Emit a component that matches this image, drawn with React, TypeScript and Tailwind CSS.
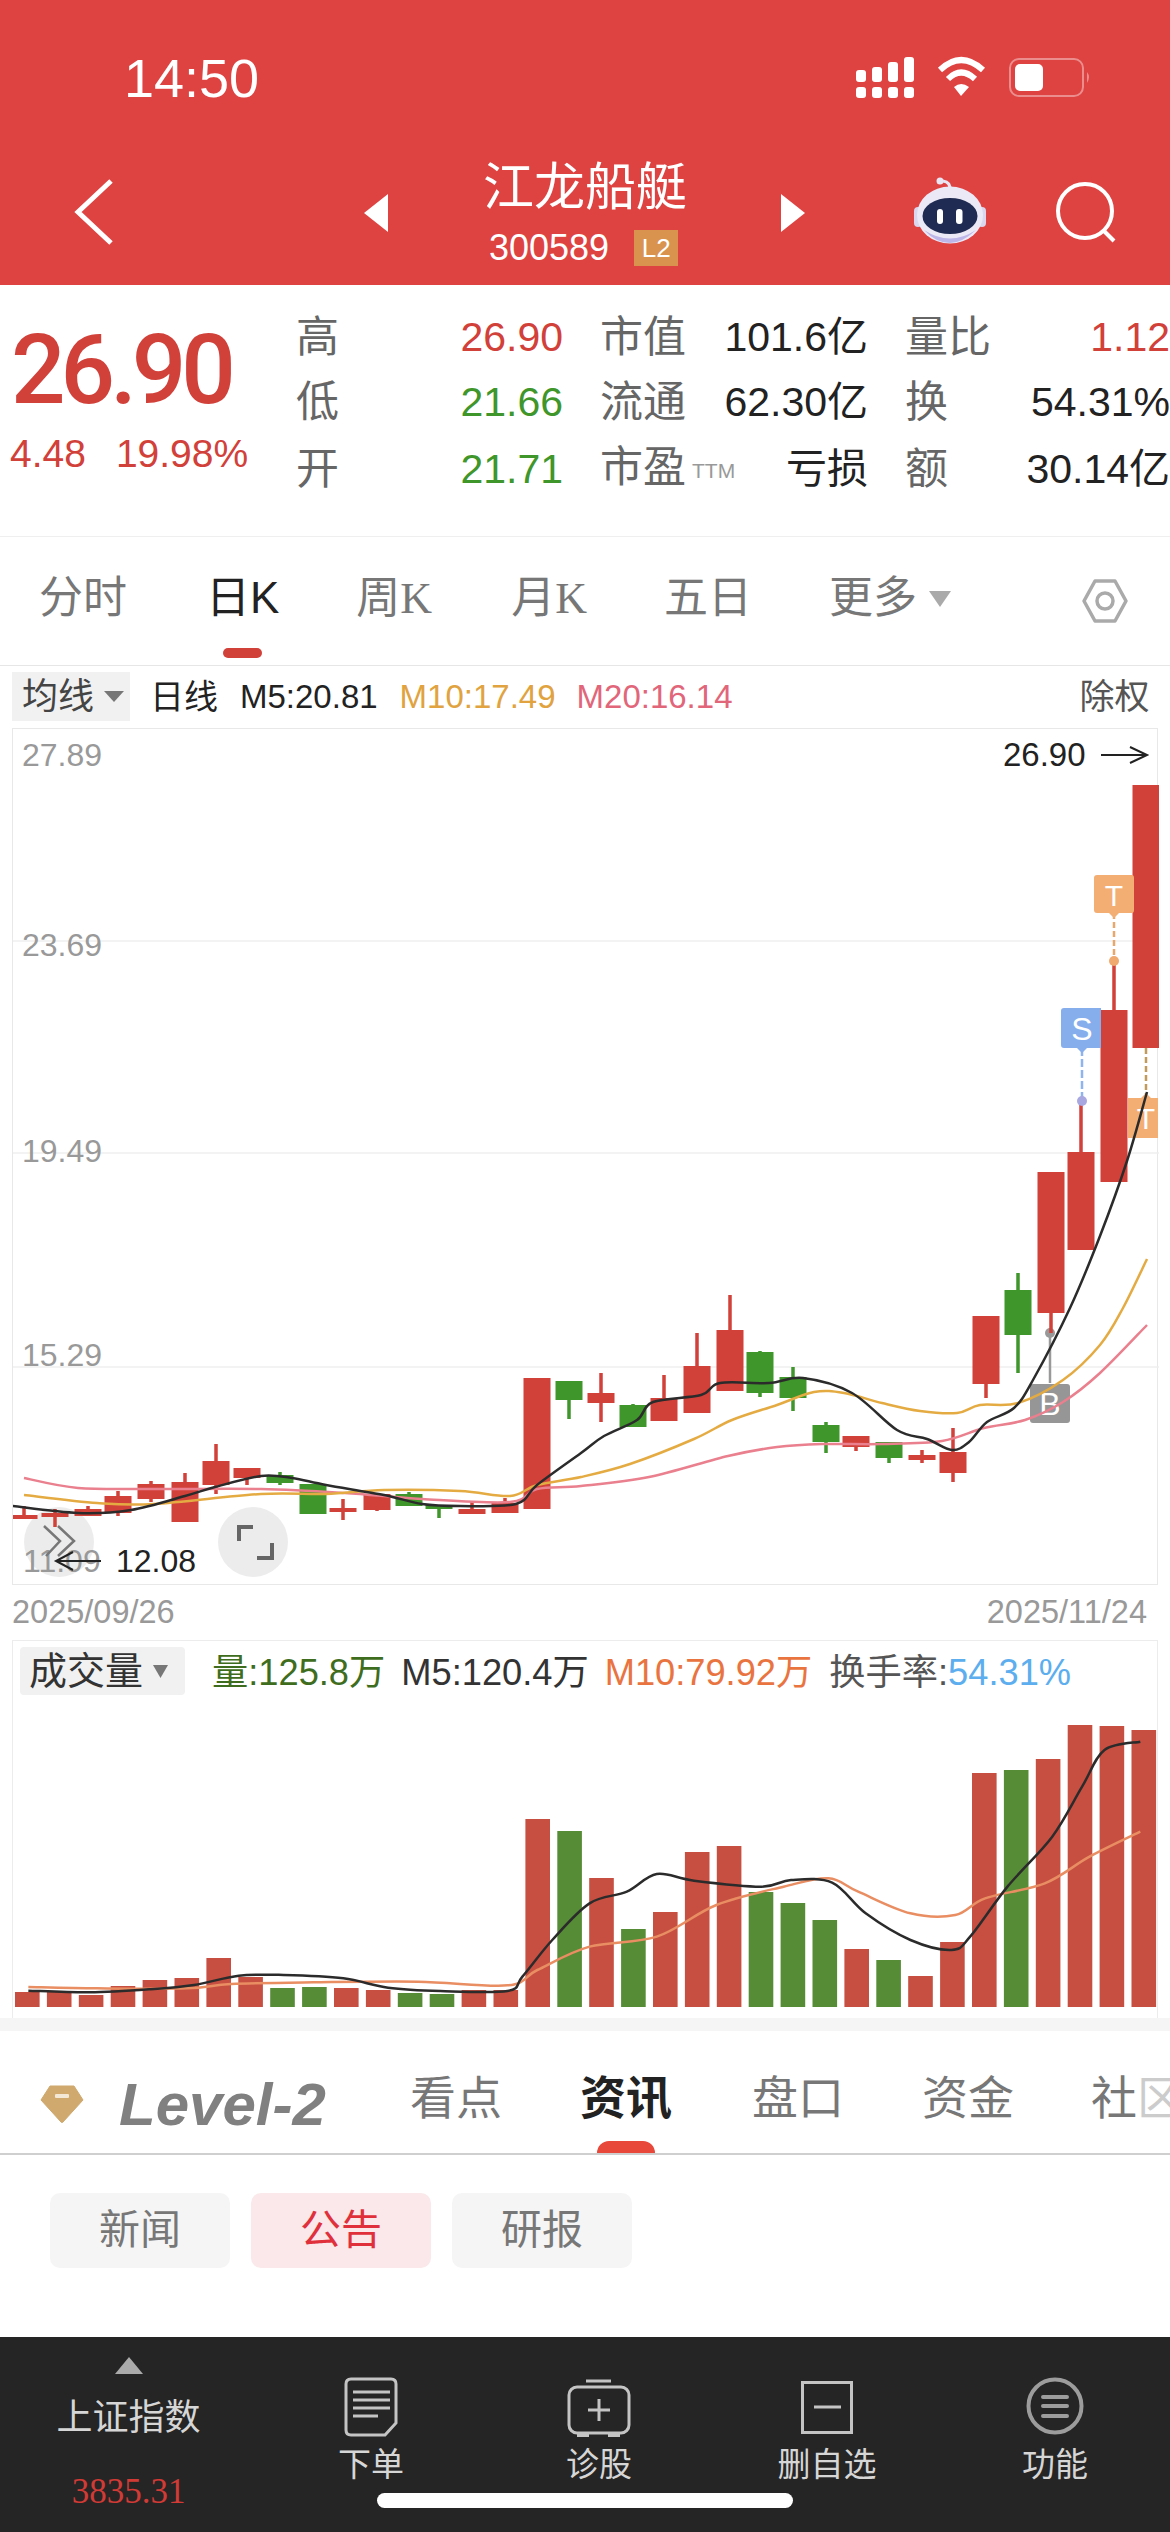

type Pt = [number, number];

// x, bodyTop, bodyBottom, wickTop, wickBottom, up
const candles: [number, number, number, number, number, boolean][] = [
  [23, 1514, 1518, 1505, 1518, true],
  [54, 1512, 1516, 1508, 1526, true],
  [87, 1508, 1515, 1505, 1515, true],
  [117, 1495, 1512, 1490, 1515, true],
  [150, 1483, 1498, 1480, 1501, true],
  [184, 1481, 1521, 1472, 1521, true],
  [215, 1460, 1484, 1443, 1493, true],
  [246, 1467, 1477, 1467, 1484, true],
  [279, 1474, 1482, 1471, 1484, false],
  [312, 1483, 1513, 1483, 1513, false],
  [342, 1507, 1511, 1498, 1519, true],
  [376, 1493, 1509, 1493, 1510, true],
  [408, 1493, 1505, 1491, 1505, false],
  [438, 1504, 1508, 1504, 1517, false],
  [471, 1508, 1513, 1500, 1513, true],
  [504, 1502, 1512, 1497, 1512, true],
  [536, 1377, 1508, 1377, 1508, true],
  [568, 1380, 1399, 1380, 1418, false],
  [600, 1392, 1402, 1372, 1421, true],
  [632, 1404, 1426, 1403, 1426, false],
  [663, 1397, 1420, 1374, 1420, true],
  [696, 1365, 1412, 1332, 1412, true],
  [729, 1329, 1390, 1294, 1390, true],
  [759, 1351, 1392, 1350, 1396, false],
  [792, 1376, 1397, 1366, 1410, false],
  [825, 1424, 1441, 1421, 1452, false],
  [855, 1435, 1446, 1435, 1450, true],
  [888, 1441, 1457, 1441, 1462, false],
  [921, 1454, 1459, 1449, 1462, true],
  [952, 1451, 1472, 1427, 1481, true],
  [985, 1315, 1383, 1315, 1397, true],
  [1017, 1289, 1334, 1272, 1372, false],
  [1050, 1171, 1312, 1171, 1332, true],
  [1080, 1151, 1249, 1101, 1249, true],
  [1113, 1009, 1181, 960, 1181, true],
  [1145, 784, 1047, 784, 1047, true],
];

const m5: Pt[] = [[11, 1505], [77, 1512], [130, 1509], [184, 1495], [214, 1486], [260, 1475], [291, 1477], [325, 1484], [383, 1494], [421, 1503], [459, 1505], [515, 1503], [536, 1484], [580, 1452], [603, 1435], [636, 1419], [652, 1401], [700, 1394], [719, 1382], [768, 1382], [802, 1377], [851, 1392], [896, 1429], [926, 1438], [951, 1449], [968, 1441], [986, 1421], [1013, 1407], [1032, 1379], [1069, 1307], [1099, 1235], [1126, 1160], [1146, 1091]];
const m10: Pt[] = [[23, 1494], [96, 1502], [153, 1503], [260, 1493], [325, 1493], [383, 1489], [459, 1490], [509, 1495], [536, 1484], [580, 1476], [629, 1463], [693, 1438], [731, 1419], [776, 1404], [813, 1391], [843, 1392], [881, 1402], [919, 1410], [956, 1412], [979, 1404], [1017, 1402], [1062, 1379], [1099, 1344], [1122, 1307], [1146, 1258]];
const m20: Pt[] = [[23, 1477], [77, 1487], [153, 1488], [260, 1488], [344, 1492], [421, 1498], [509, 1501], [536, 1488], [580, 1485], [648, 1476], [727, 1455], [776, 1446], [821, 1443], [881, 1443], [941, 1440], [983, 1427], [1024, 1419], [1062, 1401], [1099, 1372], [1146, 1324]];

// top of each volume bar, page y
const volTops: [number, boolean][] = [
  [1992, true], [1992, true], [1995, true], [1986, true], [1980, true], [1978, true], [1958, true], [1977, true], [1988, false],
  [1987, false], [1988, true], [1990, true], [1993, false], [1994, false], [1990, true], [1990, true], [1819, true], [1831, false],
  [1878, true], [1929, false], [1912, true], [1852, true], [1846, true], [1892, false], [1903, false], [1920, false], [1949, true],
  [1960, false], [1976, true], [1942, true], [1773, true], [1770, false], [1759, true], [1725, true], [1726, true], [1730, true],
];

const volM5: Pt[] = [[38, 1082], [120, 1087], [200, 1078], [260, 1065], [320, 1037], [380, 1035], [460, 1045], [520, 1073], [590, 1083], [680, 1083], [700, 1040], [740, 930], [790, 820], [840, 785], [880, 732], [930, 752], [1020, 770], [1060, 750], [1115, 758], [1160, 850], [1220, 930], [1275, 960], [1300, 920], [1350, 770], [1410, 620], [1450, 470], [1480, 360], [1528, 335]].map(([x, y]) => [x / 1.34, 1630 + y / 3] as Pt);
const volM10: Pt[] = [[38, 1071], [130, 1075], [250, 1075], [310, 1062], [420, 1057], [560, 1055], [680, 1066], [720, 1020], [790, 950], [880, 920], [960, 825], [1050, 770], [1110, 745], [1150, 785], [1220, 850], [1280, 855], [1320, 805], [1400, 760], [1460, 680], [1528, 605]].map(([x, y]) => [x / 1.34, 1630 + y / 3] as Pt);

function smooth(pts: Pt[]) {
  let d = `M${pts[0][0]} ${pts[0][1]}`;
  for (let i = 0; i < pts.length - 1; i++) {
    const p0 = pts[Math.max(i - 1, 0)];
    const p1 = pts[i];
    const p2 = pts[i + 1];
    const p3 = pts[Math.min(i + 2, pts.length - 1)];
    d += ` C${p1[0] + (p2[0] - p0[0]) / 6} ${p1[1] + (p2[1] - p0[1]) / 6} ${p2[0] - (p3[0] - p1[0]) / 6} ${p2[1] - (p3[1] - p1[1]) / 6} ${p2[0]} ${p2[1]}`;
  }
  return d;
}

const RED = '#d2403a';
const GREEN = '#3f962b';

function StatusIcons() {
  return (
    <svg width="240" height="48" viewBox="852 54 240 48" className="mr-[78px] mt-[54px]">
      {[856, 872, 888, 904].map((x) => (
        <rect key={x} x={x} y={87} width={10} height={11} rx={3} fill="#fff" />
      ))}
      <rect x={856} y={70} width={10} height={12} rx={3} fill="#fff" />
      <rect x={872} y={67} width={10} height={15} rx={3} fill="#fff" />
      <rect x={888} y={62} width={10} height={20} rx={3} fill="#fff" />
      <rect x={904} y={57} width={10} height={25} rx={3} fill="#fff" />
      <path d="M940 70 Q961 50 983 70" fill="none" stroke="#fff" strokeWidth="6" />
      <path d="M948 79 Q961 66 975 79" fill="none" stroke="#fff" strokeWidth="6" />
      <path d="M954 87 Q961 81 969 87 L961 96 Z" fill="#fff" />
      <rect x={1010} y={59} width={73} height={37} rx={9} fill="none" stroke="#fff" strokeOpacity="0.4" strokeWidth="2" />
      <rect x={1015} y={64} width={28} height={27} rx={5} fill="#fff" />
      <path d="M1087 72 Q1091 77 1087 83 Z" fill="#fff" fillOpacity="0.4" />
    </svg>
  );
}

function Robot() {
  return (
    <svg width="76" height="68" viewBox="910 176 76 68" className="ml-[107px] mt-[21px]">
      <path d="M948 190 Q949 181 941 180" fill="none" stroke="#e9e6f4" strokeWidth="3" />
      <circle cx="938" cy="180" r="3.5" fill="#e9e6f4" />
      <rect x="912" y="206" width="8" height="20" rx="4" fill="#d9d6ee" />
      <rect x="976" y="206" width="8" height="20" rx="4" fill="#d9d6ee" />
      <ellipse cx="948" cy="214" rx="33" ry="28.5" fill="#ece9f7" />
      <path d="M922 229 Q948 246 974 229 Q960 242 948 242 Q934 242 922 229Z" fill="#bdb6e8" />
      <ellipse cx="948" cy="215" rx="27.5" ry="18" fill="#1f2b52" />
      <rect x="935" y="208" width="6" height="15" rx="3" fill="#fff" />
      <rect x="954" y="208" width="6.5" height="15" rx="3" fill="#fff" />
    </svg>
  );
}

function PriceChart() {
  return (
    <svg width="1146" height="857" viewBox="12 728 1146 857" className="block">
      {[940, 1152, 1366].map((y) => (
        <line key={y} x1="12" x2="1158" y1={y} y2={y} stroke="#efefef" strokeWidth="1.5" />
      ))}
      {[
        ['27.89', 765],
        ['23.69', 955],
        ['19.49', 1161],
        ['15.29', 1365],
      ].map(([t, y]) => (
        <text key={t} x="21" y={y} fontSize="32" fill="#999">
          {t}
        </text>
      ))}
      <circle cx="58" cy="1541" r="35" fill="#ececec" />
      <circle cx="252" cy="1541" r="35" fill="#ececec" />
      <text x="22" y="1571" fontSize="32" fill="#999">11.09</text>
      <path d="M43 1525 L59 1540 L45 1555 M57 1525 L73 1540 L57 1555" fill="none" stroke="#777" strokeWidth="2.5" />
      <path d="M100 1560 H56 M72 1551 L55 1560 L72 1569" fill="none" stroke="#222" strokeWidth="2" />
      <text x="115" y="1571" fontSize="32" fill="#222">12.08</text>
      <path d="M238 1540 V1526 H252 M271 1542 V1557 H256" fill="none" stroke="#666" strokeWidth="4" />

      {/* B marker under the candles */}
      <path d="M1049 1332 V1382" stroke="#999" strokeWidth="2.5" />
      <circle cx="1049" cy="1332" r="5" fill="#999" />
      <rect x="1029" y="1383" width="40" height="39" rx="3" fill="#969696" />
      <text x="1049" y="1414" fontSize="32" fill="#fff" textAnchor="middle">B</text>

      {candles.map(([x, t, b, wt, wb, up]) => (
        <g key={x} fill={up ? RED : GREEN}>
          <rect x={x - 1.75} y={wt} width="3.5" height={wb - wt} />
          <rect x={x - 13.5} y={t} width="27" height={b - t} />
        </g>
      ))}

      {/* T / S markers */}
      <path d="M1113 912 V960" stroke="#e9a86b" strokeWidth="2.5" strokeDasharray="6 3" />
      <circle cx="1113" cy="960" r="5" fill="#f0a96e" />
      <path d="M1096 874 H1131 Q1133 874 1133 877 V909 Q1133 912 1131 912 H1118 L1113 917 L1108 912 H1096 Q1093 912 1093 909 V877 Q1093 874 1096 874Z" fill="#f2ae73" />
      <text x="1113" y="905" fontSize="30" fill="#fff" textAnchor="middle">T</text>

      <path d="M1081 1047 V1100" stroke="#8fb4ee" strokeWidth="2.5" strokeDasharray="8 3" />
      <circle cx="1081" cy="1100" r="5" fill="#a9a7e0" />
      <path d="M1063 1007 H1100 V1047 H1086 L1081 1052 L1076 1047 H1063 Q1060 1047 1060 1044 V1010 Q1060 1007 1063 1007Z" fill="#86aeed" />
      <text x="1081" y="1039" fontSize="32" fill="#fff" textAnchor="middle">S</text>

      <path d="M1145 1047 V1097" stroke="#c29a5d" strokeWidth="2.5" strokeDasharray="6 3" />
      <path d="M1127 1097 H1140 L1145 1092 L1150 1097 H1157 V1137 H1127Z" fill="#f2ae73" />
      <text x="1145" y="1128" fontSize="30" fill="#fff" textAnchor="middle">T</text>

      <path d={smooth(m20)} fill="none" stroke="#ea7f8e" strokeWidth="2.5" />
      <path d={smooth(m10)} fill="none" stroke="#e5ab43" strokeWidth="2.5" />
      <path d={smooth(m5)} fill="none" stroke="#2b2b2b" strokeWidth="2.5" />

      <text x="1002" y="765" fontSize="33" fill="#222">26.90</text>
      <path d="M1100 754 H1145 M1129 746 L1146 754 L1129 762" fill="none" stroke="#222" strokeWidth="2" />
    </svg>
  );
}

function VolumeChart() {
  return (
    <svg width="1144" height="316" viewBox="13 1702 1144 316" className="block">
      {volTops.map(([top, up], i) => (
        <rect key={i} x={15 + i * 31.9} y={top} width="24.6" height={2007 - top} fill={up ? '#c64f41' : '#568c36'} />
      ))}
      <path d={smooth(volM10)} fill="none" stroke="#e98d62" strokeWidth="2.5" />
      <path d={smooth(volM5)} fill="none" stroke="#2b2b2b" strokeWidth="2.5" />
    </svg>
  );
}

function QuoteCell({ label, value, color, ttm }: { label: string; value: string; color: string; ttm?: boolean }) {
  return (
    <div className="flex items-center justify-between">
      <span className="text-[43px] leading-[65px] text-[#666]">
        {label}
        {ttm && <span className="ml-[6px] align-[4px] text-[21px] text-[#999]">TTM</span>}
      </span>
      <span className={`text-[41px] leading-[65px] ${color}`}>{value}</span>
    </div>
  );
}

function BottomIcon({ label, children }: { label: string; children: React.ReactNode }) {
  return (
    <div className="flex w-[228px] flex-col items-center pt-[40px]">
      <div className="h-[60px]">{children}</div>
      <div className="mt-[8px] text-[33px] leading-[40px] text-[#d6d6d6]">{label}</div>
    </div>
  );
}

export default function App() {
  return (
    <div className="relative h-[2532px] w-[1170px] overflow-hidden bg-white font-['Liberation_Sans','Noto_Sans_CJK_SC',sans-serif]">
      {/* red header */}
      <div className="h-[285px] bg-[#de4241] text-white">
        <div className="flex h-[156px] justify-between">
          <div className="ml-[124px] mt-[49px] text-[54px] leading-[58px]">14:50</div>
          <StatusIcons />
        </div>
        <div className="flex items-start">
          <svg width="40" height="66" viewBox="0 0 40 66" className="ml-[74px] mt-[23px]">
            <path d="M37 2 L4 33 L37 64" fill="none" stroke="#fff" strokeWidth="5" />
          </svg>
          <svg width="24" height="38" viewBox="0 0 24 38" className="ml-[250px] mt-[38px]">
            <path d="M24 0 V38 L0 19Z" fill="#fff" />
          </svg>
          <div className="ml-[93px] w-[208px]">
            <div className="pt-[3px] text-center text-[51px] leading-[58px]">江龙船艇</div>
            <div className="mt-[13px] flex items-center">
              <span className="ml-[8px] text-[36px] leading-[36px]">300589</span>
              <span className="ml-[25px] flex h-[36px] w-[44px] items-center justify-center bg-[#d9934e] text-[26px]">L2</span>
            </div>
          </div>
          <svg width="24" height="38" viewBox="0 0 24 38" className="ml-[92px] mt-[38px]">
            <path d="M0 0 V38 L24 19Z" fill="#fff" />
          </svg>
          <Robot />
          <svg width="66" height="66" viewBox="1050 178 66 66" className="ml-[64px] mt-[22px]">
            <circle cx="1083" cy="211" r="27" fill="none" stroke="#fff" strokeWidth="4" />
            <path d="M1102 231 L1112 241" stroke="#fff" strokeWidth="4" />
          </svg>
        </div>
      </div>

      {/* quote block */}
      <div className="flex h-[252px] border-b border-[#efefef]">
        <div className="w-[296px]">
          <div className="ml-[11px] mt-[35px] text-[96px] font-medium leading-[100px] tracking-[-5px] text-[#d2403a] font-['Roboto']">26.90</div>
          <div className="mt-[9px] flex text-[39px] leading-[50px] text-[#d2403a]">
            <span className="ml-[10px]">4.48</span>
            <span className="ml-[30px]">19.98%</span>
          </div>
        </div>
        <div className="mt-[20px] grid h-fit w-[874px] grid-cols-[267px_268px_265px] gap-x-[37px]">
          <QuoteCell label="高" value="26.90" color="text-[#d2403a]" />
          <QuoteCell label="市值" value="101.6亿" color="text-[#222]" />
          <QuoteCell label="量比" value="1.12" color="text-[#d2403a]" />
          <QuoteCell label="低" value="21.66" color="text-[#3f962b]" />
          <QuoteCell label="流通" value="62.30亿" color="text-[#222]" />
          <QuoteCell label="换" value="54.31%" color="text-[#222]" />
          <QuoteCell label="开" value="21.71" color="text-[#3f962b]" />
          <QuoteCell label="市盈" ttm value="亏损" color="text-[#222]" />
          <QuoteCell label="额" value="30.14亿" color="text-[#222]" />
        </div>
      </div>

      {/* period tabs */}
      <div className="flex h-[129px] items-start border-b border-[#e6e6e6] pt-[33px] text-[44px] leading-[56px] text-[#777]">
        <span className="ml-[39px]">分时</span>
        <div className="ml-[79px] flex flex-col items-center text-[#222]">
          <span>日K</span>
          <span className="mt-[22px] h-[10px] w-[39px] rounded-full bg-[#d2403a]" />
        </div>
        <span className="ml-[77px]">
          周<span className="font-['Liberation_Serif']">K</span>
        </span>
        <span className="ml-[79px]">
          月<span className="font-['Liberation_Serif']">K</span>
        </span>
        <span className="ml-[77px]">五日</span>
        <span className="ml-[77px]">更多</span>
        <svg width="22" height="16" viewBox="0 0 22 16" className="ml-[12px] mt-[21px]">
          <path d="M0 0 H22 L11 16Z" fill="#aaa" />
        </svg>
        <svg width="46" height="44" viewBox="0 0 46 44" className="ml-[131px] mt-[9px]">
          <path d="M13 2 H33 L44 22 L33 42 H13 L2 22Z" fill="none" stroke="#aaa" strokeWidth="3.5" strokeLinejoin="round" />
          <circle cx="23" cy="22" r="8" fill="none" stroke="#aaa" strokeWidth="3.5" />
        </svg>
      </div>

      {/* MA legend */}
      <div className="flex h-[62px] items-start">
        <div className="ml-[12px] mt-[6px] flex h-[49px] w-[118px] items-center bg-[#f1f1f1] pl-[10px] text-[36px] text-[#444]">
          均线
          <svg width="20" height="11" viewBox="0 0 20 11" className="ml-[10px]">
            <path d="M0 0 H20 L10 11Z" fill="#777" />
          </svg>
        </div>
        <span className="ml-[20px] mt-[10px] text-[34px] leading-[42px] text-[#222]">日线</span>
        <span className="ml-[22px] mt-[10px] text-[33px] leading-[42px] text-[#222]">M5:20.81</span>
        <span className="ml-[22px] mt-[10px] text-[33px] leading-[42px] text-[#e0a340]">M10:17.49</span>
        <span className="ml-[21px] mt-[10px] text-[33px] leading-[42px] text-[#e2667a]">M20:16.14</span>
        <span className="ml-[347px] mt-[10px] text-[35px] leading-[42px] text-[#555]">除权</span>
      </div>

      {/* price chart */}
      <div className="ml-[12px] h-[857px] w-[1146px] border-x border-t border-b border-[#e8e8e8] font-['Liberation_Sans']">
        <PriceChart />
      </div>
      <div className="flex h-[55px] justify-between pl-[12px] pr-[23px] pt-[11px] text-[32.5px] leading-[32px] text-[#999]">
        <span>2025/09/26</span>
        <span>2025/11/24</span>
      </div>

      {/* volume */}
      <div className="ml-[12px] h-[378px] w-[1146px] border-x border-t border-[#ececec]">
        <div className="flex h-[61px] items-start">
          <div className="ml-[7px] mt-[6px] flex h-[48px] w-[165px] items-center rounded-[4px] bg-[#f1f1f1] pl-[9px] text-[38px] text-[#333]">
            成交量
            <svg width="15" height="13" viewBox="0 0 15 13" className="ml-[10px]">
              <path d="M0 0 H15 L7.5 13Z" fill="#777" />
            </svg>
          </div>
          <div className="ml-[27px] mt-[9px] flex text-[36.25px] leading-[46px]">
            <span className="text-[#3f6d20]">量:125.8万</span>
            <span className="ml-[16px] text-[#333]">M5:120.4万</span>
            <span className="ml-[16px] text-[#e9743f]">M10:79.92万</span>
            <span className="ml-[17px] text-[#555]">
              换手率:<span className="text-[#5caeee]">54.31%</span>
            </span>
          </div>
        </div>
        <VolumeChart />
      </div>
      <div className="h-[13px] bg-[#f5f5f5]" />

      {/* detail tabs */}
      <div className="flex h-[124px] items-start overflow-hidden whitespace-nowrap border-b-2 border-[#cfcfcf] text-[46px] leading-[60px] text-[#777]">
        <svg width="44" height="38" viewBox="0 0 44 38" className="ml-[40px] mt-[54px] shrink-0">
          <path d="M10 1 H34 L43 15 L23 37 Q22 38 21 37 L1 15Z" fill="#cfa96e" stroke="#cfa96e" strokeWidth="1" strokeLinejoin="round" />
          <rect x="15" y="9" width="14" height="4" rx="1" fill="#f3e8d6" />
        </svg>
        <span className="ml-[35px] mt-[39px] w-[209px] shrink-0 text-[60px] font-bold italic leading-[70px] text-[#808080]">Level-2</span>
        <span className="ml-[82px] mt-[37px] shrink-0">看点</span>
        <div className="ml-[78px] mt-[37px] flex shrink-0 flex-col items-center font-bold text-[#222]">
          <span>资讯</span>
          <span className="mt-[13px] h-[12px] w-[58px] rounded-t-full bg-[#e8483a]" />
        </div>
        <span className="ml-[80px] mt-[37px] shrink-0">盘口</span>
        <span className="ml-[78px] mt-[37px] shrink-0">资金</span>
        <span className="ml-[77px] mt-[37px] shrink-0">
          社<span className="text-[#ccc]">区</span>
        </span>
      </div>

      {/* sub tabs */}
      <div className="flex h-[182px] items-start gap-[21px] pl-[50px] pt-[38px] text-[41px] leading-[75px]">
        <span className="w-[180px] rounded-[10px] bg-[#f5f5f5] text-center text-[#777]">新闻</span>
        <span className="w-[180px] rounded-[10px] bg-[#fae8eb] text-center text-[#e0303c]">公告</span>
        <span className="w-[180px] rounded-[10px] bg-[#f5f5f5] text-center text-[#777]">研报</span>
      </div>

      {/* bottom bar */}
      <div className="flex h-[195px] bg-[#252525]">
        <div className="flex w-[257px] flex-col items-center">
          <svg width="28" height="17" viewBox="0 0 28 17" className="mt-[20px]">
            <path d="M14 0 L28 17 H0Z" fill="#aaa" />
          </svg>
          <div className="mt-[22px] text-[36px] leading-[44px] text-[#d6d6d6]">上证指数</div>
          <div className="mt-[32px] text-[35px] leading-[40px] text-[#d23a35] font-['Liberation_Serif']">3835.31</div>
        </div>
        <BottomIcon label="下单">
          <svg width="54" height="60" viewBox="0 0 54 60" fill="none" stroke="#c4c4c4" strokeWidth="3">
            <path d="M7 2 H47 Q52 2 52 7 V46 L41 58 H7 Q2 58 2 53 V7 Q2 2 7 2Z" />
            <path d="M9 15 H46 M9 23 H46 M9 31 H46 M9 39 H34" />
          </svg>
        </BottomIcon>
        <BottomIcon label="诊股">
          <svg width="64" height="60" viewBox="0 0 64 60" fill="none" stroke="#c4c4c4" strokeWidth="3">
            <path d="M19 4 H44" />
            <rect x="2" y="10" width="60" height="46" rx="8" />
            <path d="M32 22 V44 M21 33 H43" />
            <path d="M10 58 H22 M41 58 H53" strokeWidth="4" />
          </svg>
        </BottomIcon>
        <BottomIcon label="删自选">
          <svg width="52" height="60" viewBox="0 0 52 60" fill="none" stroke="#c4c4c4" strokeWidth="3">
            <rect x="1.5" y="5.5" width="49" height="50" />
            <path d="M13 30 H40" />
          </svg>
        </BottomIcon>
        <BottomIcon label="功能">
          <svg width="58" height="58" viewBox="0 0 58 58" fill="none" stroke="#9c9c9c" strokeWidth="4">
            <circle cx="29" cy="29" r="26.5" />
            <path d="M17 20 H41 M17 29 H41 M17 39 H41" strokeLinecap="round" />
          </svg>
        </BottomIcon>
      </div>

      {/* home indicator */}
      <div className="absolute left-[377px] top-[2493px] h-[15px] w-[416px] rounded-full bg-white" />
    </div>
  );
}
